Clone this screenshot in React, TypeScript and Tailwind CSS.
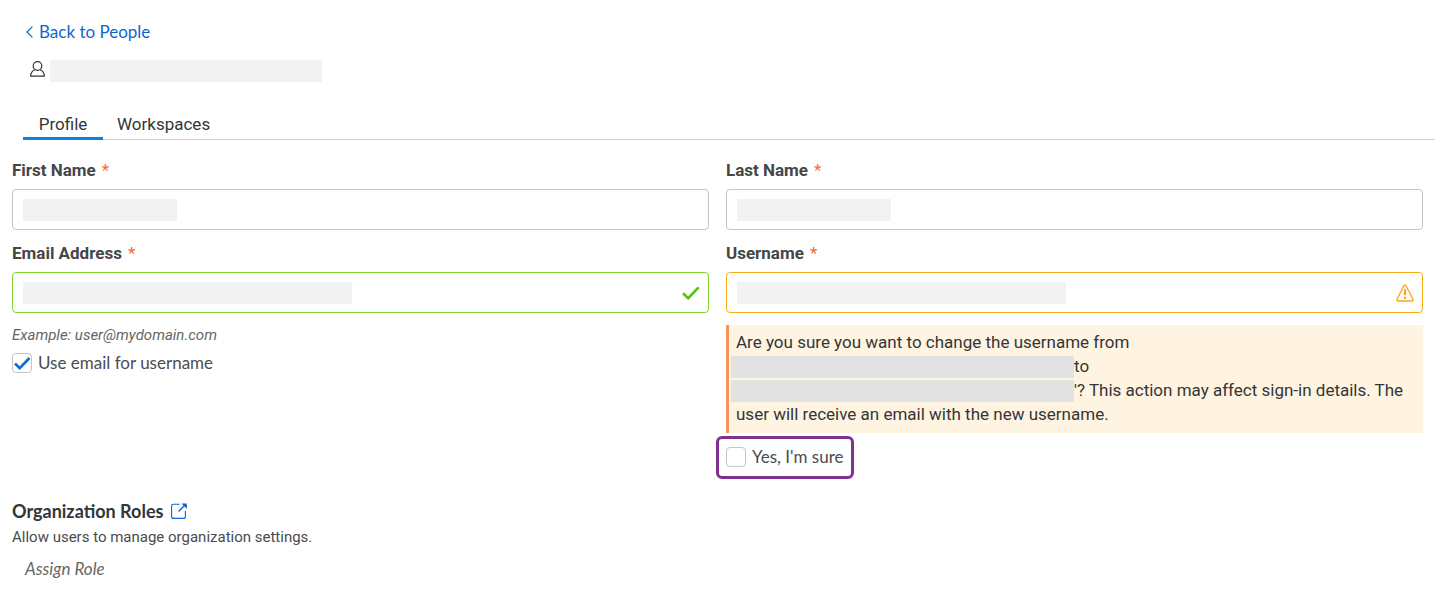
import React, { useState } from "react";

type Tone = "default" | "valid" | "warning";

const toneClass: Record<Tone, string> = {
  default: "border-[#c4c4c4]",
  valid: "border-[#82d42d]",
  warning: "border-[#fbab18]",
};

function FieldLabel({ id, text }: { id: string; text: string }) {
  return (
    <label htmlFor={id} className="flex gap-1.5 text-[17px] leading-6 font-bold text-[#444648]">
      {text}
      <span className="font-normal text-[#f26b3a]">*</span>
    </label>
  );
}

function Field({
  id,
  label,
  type = "text",
  tone = "default",
  maskClass,
  children,
}: {
  id: string;
  label: string;
  type?: string;
  tone?: Tone;
  maskClass: string;
  children?: React.ReactNode;
}) {
  return (
    <div className="flex flex-col gap-[7px]">
      <FieldLabel id={id} text={label} />
      <div className={`flex h-[41px] items-center rounded border bg-white px-2.5 ${toneClass[tone]}`}>
        <span className={`h-[22px] shrink-0 bg-[#f2f2f2] ${maskClass}`} />
        <input id={id} type={type} required className="h-full min-w-0 flex-1 bg-transparent px-1 text-base outline-none" />
        {children}
      </div>
    </div>
  );
}

function Check({ id, label, defaultChecked = false }: { id: string; label: string; defaultChecked?: boolean }) {
  return (
    <div className="flex h-6 items-center gap-1.5">
      <span className="relative flex">
        <input
          id={id}
          type="checkbox"
          defaultChecked={defaultChecked}
          className="peer size-5 appearance-none rounded border border-[#c4c4c4] bg-white"
        />
        <svg
          viewBox="0 0 20 20"
          className="pointer-events-none absolute inset-0 hidden size-5 peer-checked:block"
          fill="none"
          stroke="#0d6ad1"
          strokeWidth="2.6"
        >
          <path d="M3 10.5l4.7 4.6L17.5 5" />
        </svg>
      </span>
      <label htmlFor={id} className="font-[Lato,sans-serif] text-[17px] leading-6 text-[#4a4c4e]">
        {label}
      </label>
    </div>
  );
}

export default function App() {
  const [tab, setTab] = useState("Profile");
  return (
    <main className="bg-white pt-5 pb-6 font-[Roboto,sans-serif] text-[#333638]">
      <header className="pl-[23px]">
        <a href="#people" className="flex w-fit items-center gap-1.5 pl-[3px] font-[Lato,sans-serif] text-[17px] leading-6 text-[#0d66d0]">
          <svg viewBox="0 0 7 12" className="h-3 w-[7px]" fill="none" stroke="currentColor" strokeWidth="1.2">
            <path d="M6.4 0.6L1 6l5.4 5.4" />
          </svg>
          Back to People
        </a>
        <div className="mt-4 flex gap-1.5 pl-[7px]">
          <svg viewBox="0 0 15 17" className="h-[17px] w-[15px]" fill="none" stroke="#333638" strokeWidth="1.2">
            <circle cx="7.5" cy="6" r="4.3" />
            <path d="M5 9.7C2.4 10.6 0.8 12.8 0.6 16.2h13.8C14.2 12.8 12.6 10.6 10 9.7" />
          </svg>
          <span className="-ml-px h-[22px] w-[272px] bg-[#f2f2f2]" />
        </div>
        <div role="tablist" className="mt-[25px] flex border-b border-[#cfd1d2]">
          {["Profile", "Workspaces"].map((name) => (
            <button
              key={name}
              role="tab"
              type="button"
              aria-selected={tab === name}
              onClick={() => setTab(name)}
              className={`-mb-px h-[33px] border-b-3 pt-1 text-[17px] leading-6 ${
                tab === name ? "w-20 border-[#0a84e4]" : "border-transparent px-3.5"
              }`}
            >
              {name}
            </button>
          ))}
        </div>
      </header>

      <form className="px-3 pt-[18px]">
        <div className="grid grid-cols-2 gap-x-[17px] gap-y-[11px]">
          <Field id="first" label="First Name" maskClass="w-[154px]" />
          <Field id="last" label="Last Name" maskClass="w-[154px]" />
          <div>
            <Field id="email" label="Email Address" type="email" tone="valid" maskClass="w-[329px]">
              <svg viewBox="0 0 18 14" className="-mr-0.5 h-3.5 w-[18px]" fill="none" stroke="#5bbf0f" strokeWidth="2.6">
                <path d="M1 7.2l5.2 5L16.6 1.4" />
              </svg>
            </Field>
            <p className="mt-3 text-[15px] leading-5 text-[#666] italic">Example: user@mydomain.com</p>
            <div className="mt-1.5">
              <Check id="use-email" label="Use email for username" defaultChecked />
            </div>
          </div>
          <div>
            <Field id="username" label="Username" tone="warning" maskClass="w-[329px]">
              <svg viewBox="0 0 18 18" className="-mr-0.5 size-[18px]" fill="none" stroke="#fba11b" strokeWidth="1.3">
                <path d="M8.1 1.5Q9 0.3 9.9 1.5L17 15.3Q17.5 16.9 16 17H2Q0.5 16.9 1 15.3Z" />
                <path d="M9 5.2v6" strokeWidth="2.2" />
                <path d="M9 12.8v2.2" strokeWidth="2.2" />
              </svg>
            </Field>
            <p className="mt-3 border-l-3 border-[#f7935c] bg-[#fff4e1] pt-[5px] pr-2 pb-[7px] pl-[7px] text-[17px] leading-6">
              Are you sure you want to change the username from{" "}
              <br />
              <span className="mt-0.5 -ml-[5px] inline-block h-[22px] w-[343px] bg-[#e2e2e2] align-top" />
              to
              <br />
              <span className="mt-0.5 -ml-[5px] inline-block h-[22px] w-[343px] bg-[#e2e2e2] align-top" />
              '? This action may affect sign-in details. The user will receive an email with the new username.
            </p>
            <div className="mt-[3px] -ml-2.5 flex h-[43px] w-fit items-center rounded-md border-3 border-[#7f3192] px-[7px] pb-0.5">
              <Check id="confirm" label="Yes, I'm sure" />
            </div>
          </div>
        </div>

        <section className="mt-5">
          <h2 className="flex items-center gap-2 font-[Lato,sans-serif] text-[18px] leading-6 font-bold">
            Organization Roles
            <a href="#roles" aria-label="Open organization roles">
              <svg viewBox="0 0 16 16" className="size-4" fill="none" stroke="#0d66d0" strokeWidth="1.1">
                <path d="M8.5 1.2H2.6Q0.6 1.2 0.6 3.2V13.4Q0.6 15.4 2.6 15.4H12.4Q14.4 15.4 14.4 13.4V8" />
                <path d="M7.6 8.4L14 2" strokeWidth="1.4" />
                <path d="M10.5 0.5h5.3v5.3z" fill="#0d66d0" stroke="none" />
              </svg>
            </a>
          </h2>
          <p className="mt-1 text-[15px] leading-5 text-[#4a4c4e]">Allow users to manage organization settings.</p>
          <button type="button" className="mt-2.5 ml-[13px] block font-[Lato,sans-serif] text-[17px] leading-6 text-[#666] italic">
            Assign Role
          </button>
        </section>
      </form>
    </main>
  );
}
